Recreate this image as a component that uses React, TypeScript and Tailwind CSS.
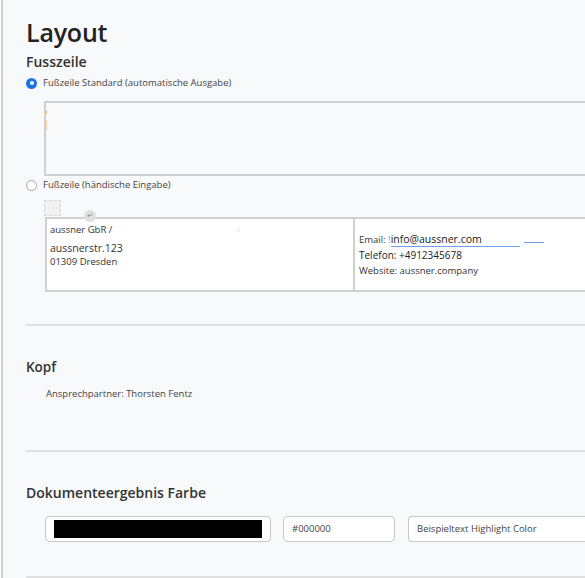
import React from "react";

export default function App() {
  const font = { fontFamily: '"Open Sans", "Noto Sans", sans-serif' };
  return (
    <div className="w-[585px] h-[578px] overflow-hidden bg-white" style={font}>
      <div className="ml-[1px] h-full border-l-2 border-[#d0d0d0] bg-[#f8f9fa] pl-[23px] text-[#333]">
        <h1 className="pt-[15px] text-[25px] leading-[34px] font-semibold text-[#222] tracking-[-0.2px]">Layout</h1>
        <h2 className="mt-[3px] text-[14px] leading-[20px] font-semibold text-[#333]">Fusszeile</h2>
        <label className="mt-[4px] flex items-center gap-[6px] text-[9.5px] leading-[14px] text-[#444]">
          <span className="w-[11px] h-[11px] rounded-full bg-[#1a73e8] flex items-center justify-center">
            <span className="w-[4px] h-[4px] rounded-full bg-white" />
          </span>
          Fußzeile Standard (automatische Ausgabe)
        </label>
        <div className="mt-[11px] ml-[18px] h-[75px] border-2 border-r-0 border-[#d0d0d0] bg-[#f8f9fa] relative">
          <span className="absolute left-0 top-[8px] w-[1px] h-[3px] bg-[#e8b070]" />
          <span className="absolute left-0 top-[17px] w-[1px] h-[10px] bg-[#f3d0a8]" />
        </div>
        <label className="mt-[2px] flex items-center gap-[6px] text-[9.5px] leading-[14px] text-[#444]">
          <span className="w-[11px] h-[11px] rounded-full border border-[#aaa] bg-white" />
          Fußzeile (händische Eingabe)
        </label>
        <div className="ml-[18px] mt-[8px] relative">
          <div className="w-[17px] h-[16px] border border-dashed border-[#d8d8d8] bg-[#f0f0f0]" />
          <span className="absolute left-[40px] top-[10px] w-[12px] h-[12px] rounded-full bg-[#e0e0e0] text-[7px] leading-[12px] text-center text-[#888] z-10">↵</span>
          <div className="ml-[1px] mt-[1px] h-[75px] border-2 border-r-0 border-[#d0d0d0] bg-white flex">
            <div className="w-[308px] border-r-2 border-[#d0d0d0] pl-[3px] pt-[4px] text-[#333] relative">
              <div className="text-[9.5px] leading-[14px]">aussner GbR /</div>
              <div className="text-[10.5px] leading-[16px] mt-[3px]">aussnerstr.123</div>
              <div className="text-[9.5px] leading-[12px]">01309 Dresden</div>
              <span className="absolute left-[191px] top-[10px] w-[1px] h-[3px] bg-[#cfe8ee]" />
            </div>
            <div className="flex-1 pl-[4px] pt-[13px]">
              <div className="text-[9.5px] leading-[15px] whitespace-nowrap">
                Email: <span className="text-[#888]">!</span><span className="text-[10.5px] text-[#222] border-b border-[#6fa0ef] pr-[38px]">info@aussner.com</span>
                <span className="inline-block w-[20px] ml-[4px] border-b border-[#6fa0ef]" />
              </div>
              <div className="text-[10px] leading-[16px] text-[#222]">Telefon: +4912345678</div>
              <div className="text-[9.5px] leading-[15px]">Website: aussner.company</div>
            </div>
          </div>
        </div>
        <div className="mt-[32px] h-[2px] bg-[#e0e0e0]" />
        <h2 className="mt-[31px] text-[13.5px] leading-[20px] font-semibold text-[#333]">Kopf</h2>
        <div className="mt-[10px] ml-[20px] text-[9.5px] leading-[14px] text-[#444]">Ansprechpartner: Thorsten Fentz</div>
        <div className="mt-[49px] h-[2px] bg-[#e0e0e0]" />
        <h2 className="mt-[31px] text-[14px] leading-[20px] font-semibold text-[#333]">Dokumenteergebnis Farbe</h2>
        <div className="mt-[13px] ml-[19px] flex items-center">
          <div className="w-[226px] h-[26px] rounded-[4px] border border-[#c8c8c8] bg-white flex items-center px-[8px]">
            <div className="w-full h-[18px] bg-black" />
          </div>
          <div className="ml-[12px] w-[112px] h-[26px] rounded-[4px] border border-[#c8c8c8] bg-white flex items-center pl-[8px] text-[9.5px] text-[#444]">#000000</div>
          <div className="ml-[13px] flex-1 h-[26px] rounded-l-[4px] border border-r-0 border-[#c8c8c8] bg-white flex items-center pl-[8px] text-[9.5px] text-[#444]">Beispieltext Highlight Color</div>
        </div>
        <div className="mt-[34px] h-[2px] bg-[#e0e0e0]" />
      </div>
    </div>
  );
}
